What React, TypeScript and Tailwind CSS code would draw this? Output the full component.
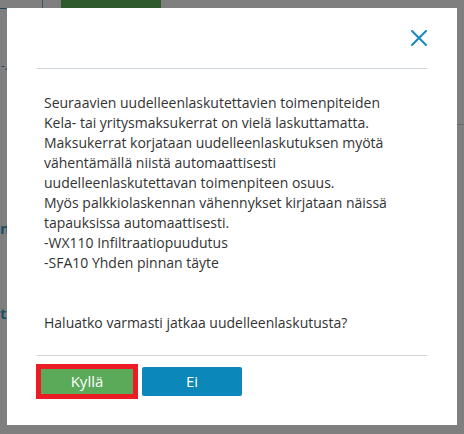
import { X } from "lucide-react";

const lines = [
    "Seuraavien uudelleenlaskutettavien toimenpiteiden",
    "Kela- tai yritysmaksukerrat on vielä laskuttamatta.",
    "Maksukerrat korjataan uudelleenlaskutuksen myötä",
    "vähentämällä niistä automaattisesti",
    "uudelleenlaskutettavan toimenpiteen osuus.",
    "Myös palkkiolaskennan vähennykset kirjataan näissä",
    "tapauksissa automaattisesti.",
    "-WX110 Infiltraatiopuudutus",
    "-SFA10 Yhden pinnan täyte",
];

// Page behind the dimmed backdrop
const BackgroundPage = () => (
    <div className="absolute inset-0 bg-[#7f7f7f]">
        <div className="flex h-[8px]">
            <div className="w-[43px] border-r border-[#3f5866]" />
            <div className="w-[18px]" />
            <div className="w-[100px] bg-[#2e5a2e]" />
        </div>
        <div className="h-px w-[7px] bg-[#1f4a5e]" />
        <div className="mt-[51px] pl-[1px] text-[12px] leading-none text-[#1f4a5e]">-.</div>
        <div className="mt-[52px] ml-auto h-px w-[7px] bg-[#6a6a6a]" />
        <div className="mt-[96px] font-bold text-[15px] leading-none text-[#1b4f6a]">ni</div>
        <div className="mt-[70px] font-bold text-[15px] leading-none text-[#1b4f6a]">ti</div>
    </div>
);

export default function App() {
    return (
        <div
            className="relative w-[464px] h-[434px] overflow-hidden"
            style={{ fontFamily: '"Open Sans", "Noto Sans", sans-serif' }}
        >
            <BackgroundPage />

            {/* Modal dialog */}
            <div className="absolute left-[7px] top-[8px] w-[450px] h-[417px] bg-white">
                <div className="flex h-[60px] justify-end items-start pr-[24px] pt-[16px]">
                    <X className="text-[#1a8ac2]" size={28} strokeWidth={1.8} />
                </div>
                <div className="mx-[30px] h-px bg-[#cfd6dc]" />

                <div className="px-[37px] pt-[24px] text-[14px] leading-[20px] text-[#333333]">
                    {lines.map((l) => (
                        <div key={l}>{l}</div>
                    ))}
                    <div className="mt-[40px]">Haluatko varmasti jatkaa uudelleenlaskutusta?</div>
                </div>

                <div className="mx-[30px] mt-[22px] h-px bg-[#d6d6d6]" />

                <div className="flex items-center gap-[4px] px-[29px] pt-[8px]">
                    <div className="border-[5px] border-[#ec1c24]">
                        <button className="w-[92px] h-[25px] bg-[#5aaa5a] text-white text-[15px]">
                            Kyllä
                        </button>
                    </div>
                    <button className="w-[100px] h-[29px] rounded-[2px] bg-[#0b87b9] text-white text-[15px]">
                        Ei
                    </button>
                </div>
            </div>
        </div>
    );
}
